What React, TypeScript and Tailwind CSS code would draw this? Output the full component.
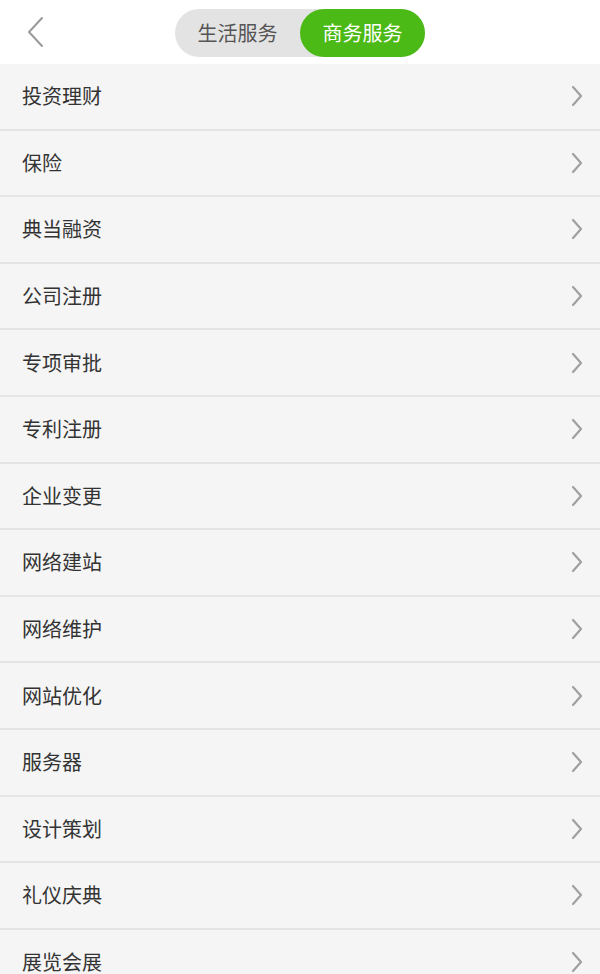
import { useState } from "react";

const items = [
  "投资理财",
  "保险",
  "典当融资",
  "公司注册",
  "专项审批",
  "专利注册",
  "企业变更",
  "网络建站",
  "网络维护",
  "网站优化",
  "服务器",
  "设计策划",
  "礼仪庆典",
  "展览会展",
];

const font = { fontFamily: '"Noto Sans CJK SC", "Noto Sans", sans-serif' };

export default function App() {
  const [tab, setTab] = useState(1);
  return (
    <div className="w-[600px] h-[974px] overflow-hidden bg-[#f5f5f5]" style={font}>
      {/* header */}
      <div className="h-[64px] bg-white flex items-center relative">
        <button className="absolute left-[22px] top-[14px] w-[26px] h-[36px] flex items-center justify-center">
          <svg width="20" height="32" viewBox="0 0 20 32" fill="none">
            <path d="M17 2 L4 16 L17 30" stroke="#9a9a9a" strokeWidth="2" strokeLinecap="round" strokeLinejoin="round" />
          </svg>
        </button>
        <div className="mx-auto flex h-[48px] w-[250px] rounded-full bg-[#e3e3e3] mt-[2px]">
          {["生活服务", "商务服务"].map((t, i) => (
            <button
              key={t}
              onClick={() => setTab(i)}
              className={
                "flex-1 rounded-full text-[20px] flex items-center justify-center " +
                (tab === i ? "bg-[#4cba16] text-white" : "text-[#555]")
              }
            >
              {t}
            </button>
          ))}
        </div>
      </div>

      {/* list */}
      <div className="flex flex-col">
        {items.map((name) => (
          <div key={name} className="h-[66.6px] border-b-2 border-[#e4e4e4] flex items-center justify-between pl-[22px] pr-[16px] shrink-0">
            <span className="text-[20px] text-[#333]">{name}</span>
            <svg width="14" height="22" viewBox="0 0 14 22" fill="none">
              <path d="M3 2 L11 11 L3 20" stroke="#a0a0a0" strokeWidth="2.2" strokeLinecap="round" strokeLinejoin="round" />
            </svg>
          </div>
        ))}
      </div>
    </div>
  );
}
